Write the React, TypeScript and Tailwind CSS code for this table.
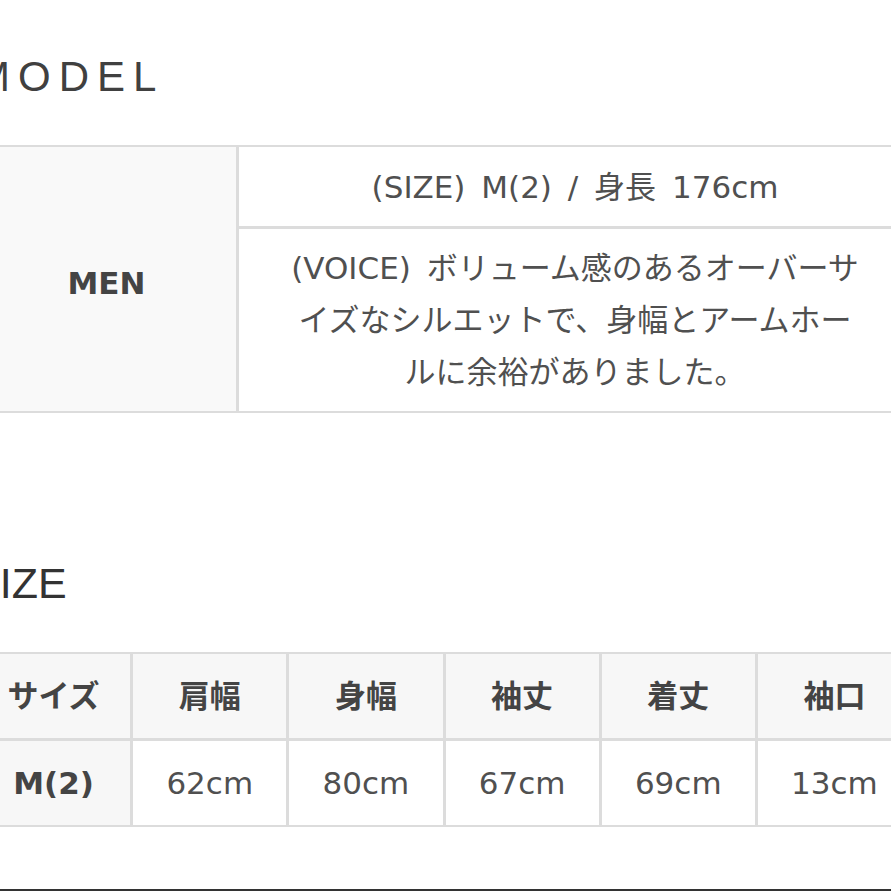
import * as React from "react"

const jp = { fontFamily: '"DejaVu Sans", "Noto Sans CJK JP", sans-serif' }
const head = { fontFamily: '"Liberation Sans", Arial, sans-serif' }

const sizeHead = ["サイズ", "肩幅", "身幅", "袖丈", "着丈", "袖口"]
const sizeRow = ["M(2)", "62cm", "80cm", "67cm", "69cm", "13cm"]

const App: React.FC = () => {
	return (
		<div className="w-[891px] h-[891px] overflow-hidden bg-white flex flex-col" style={jp}>
			<div className="ml-[-25px] w-[938px]">
				<h2 className="pt-[56px] text-[42px] leading-[42px] tracking-[8px] text-[#404040]" style={head}>
					MODEL
				</h2>

				{/* model table */}
				<div className="mt-[47px] grid grid-cols-[259px_1fr] grid-rows-[79px_182px] gap-[3px] border-2 border-[#dcdcdc] bg-[#dcdcdc] text-[31px] text-[#505050]">
					<div className="row-span-2 bg-[#f9f9f9] flex items-center justify-center pt-[8px] font-bold text-[#444]">
						MEN
					</div>
					<div className="bg-white flex items-center justify-center leading-[52px] [word-spacing:6px]">
						(SIZE) M(2) / 身長 176cm
					</div>
					<div className="bg-white flex items-center justify-center text-center leading-[52px] [word-spacing:6px]">
						<p>
							(VOICE) ボリューム感のあるオーバーサ<br />
							イズなシルエットで、身幅とアームホー<br />
							ルに余裕がありました。
						</p>
					</div>
				</div>

				<h2 className="mt-[148px] ml-[-4px] text-[43px] leading-[44px] text-[#333]" style={head}>
					SIZE
				</h2>

				{/* size table */}
				<div className="mt-[47px] grid grid-cols-6 grid-rows-[84px_84px] gap-[3px] border-2 border-[#dcdcdc] bg-[#dcdcdc] text-[31px]">
					{sizeHead.map((h) => (
						<div key={h} className="bg-[#f7f7f7] flex items-center justify-center font-bold text-[#444]">
							{h}
						</div>
					))}
					{sizeRow.map((v, i) => (
						<div
							key={v}
							className={
								i === 0
									? "bg-[#f7f7f7] flex items-center justify-center font-bold text-[#444]"
									: "bg-white flex items-center justify-center text-[#505050]"
							}
						>
							{v}
						</div>
					))}
				</div>
			</div>
			<div className="mt-auto h-[2px] bg-[#333]" />
		</div>
	)
}

export default App
